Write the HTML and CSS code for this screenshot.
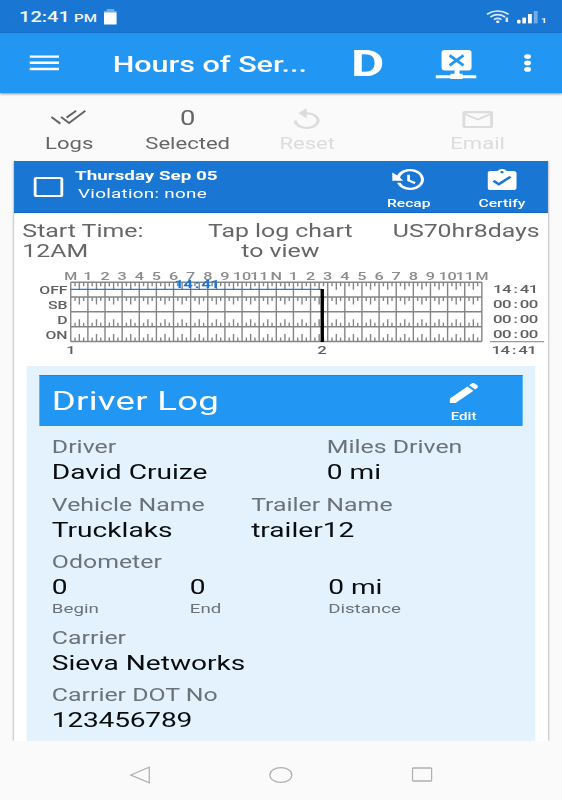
FILE: index.html
```html
<!DOCTYPE html>
<html lang="en">
<head>
<meta charset="utf-8">
<title>Hours of Service</title>
<link rel="stylesheet" href="styles.css">
</head>
<body>
<div class="screen">
  <header class="status">
    <span class="clock">12:41</span><span class="pm">PM</span>
    <svg class="battery" viewBox="0 0 14 17" preserveAspectRatio="none"><path d="M3 0h8v2h3v3H0V2h3z" fill="#75ace4"/><rect y="3.6" width="14" height="13" rx="1" fill="#fff"/></svg>
    <svg class="wifi" viewBox="0 0 24 14" preserveAspectRatio="none" fill="none" stroke="#d9e9fa" stroke-width="1.6"><path d="M.8 4.3Q11.5-2.2 22.5 4.3M4.3 7Q11.5 2.3 19 7M7.8 9.6Q11.5 7.2 15.4 9.6"/><ellipse cx="11.6" cy="11.7" rx="1.7" ry="1.2" fill="#fff" stroke="none"/><path d="M20.7 7.5v4.5" stroke-width="2.6"/></svg>
    <svg class="signal" viewBox="0 0 21 13" preserveAspectRatio="none" fill="#fff"><rect y="8.8" width="3.5" height="3.6" rx="1"/><rect x="5.3" y="6.6" width="3.7" height="5.8"/><rect x="11" y="3" width="3.8" height="9.4"/><rect x="16.8" y="0" width="3.8" height="12.4" fill="#75ace4"/></svg>
    <span class="sim">1</span>
  </header>

  <nav class="appbar">
    <svg class="menu" viewBox="0 0 30 16" preserveAspectRatio="none" stroke="#fff" stroke-width="2.4"><path d="M0 1.6h30M0 7.8h30M0 14h30"/></svg>
    <h1 class="title">Hours of Ser...</h1>
    <span class="duty">D</span>
    <svg class="network" viewBox="0 0 42 30" preserveAspectRatio="none"><path d="M9 0h24q3 0 3 2.5v15q0 3-3 3h-9v3.3h3v1.4h15v3H27v.9H15v-.9H0v-3h15v-1.4h4v-3.3H9q-3 0-3-3v-15Q6 0 9 0z" fill="#fff"/><path d="M14 5.3l14 10M28 5.3l-14 10" stroke="#2196f3" stroke-width="2.8"/></svg>
    <svg class="more" viewBox="0 0 7 18" preserveAspectRatio="none" fill="#fff"><ellipse cx="3.5" cy="2.6" rx="3.4" ry="2.4"/><ellipse cx="3.5" cy="9" rx="3.4" ry="2.4"/><ellipse cx="3.5" cy="15.4" rx="3.4" ry="2.4"/></svg>
  </nav>

  <section class="actions">
    <div class="action logs">
      <svg viewBox="0 0 36 15" preserveAspectRatio="none" fill="none" stroke="#666" stroke-width="2"><path d="M.8 7l9 6.6M10.5 7l8 6L34.8 .8M16 7.6L25.6 .8"/></svg>
      <span>Logs</span>
    </div>
    <div class="action selected"><b>0</b><span>Selected</span></div>
    <div class="action reset off">
      <svg viewBox="4 1 16 20" preserveAspectRatio="none" fill="#dcdcdc"><path d="M12 5V1L7 6l5 5V7c3.31 0 6 2.69 6 6s-2.69 6-6 6-6-2.69-6-6H4c0 4.42 3.58 8 8 8s8-3.58 8-8-3.58-8-8-8z"/></svg>
      <span>Reset</span>
    </div>
    <div class="action email off">
      <svg viewBox="2 4 20 16" preserveAspectRatio="none" fill="#dcdcdc"><path d="M22 6c0-1.1-.9-2-2-2H4c-1.1 0-2 .9-2 2v12c0 1.1.9 2 2 2h16c1.1 0 2-.9 2-2V6zm-2 0l-8 5-8-5h16zm0 12H4V8l8 5 8-5v10z"/></svg>
      <span>Email</span>
    </div>
  </section>

  <main class="card">
    <div class="day">
      <i class="check"></i>
      <div class="date"><strong>Thursday Sep 05</strong><span>Violation: none</span></div>
      <div class="tool recap">
        <svg viewBox="1 3 21 18" preserveAspectRatio="none" fill="#fff"><path d="M13 3c-4 0-7.3 2.2-8.5 5.5L1.2 6v7h7.2L6.3 10.5C7 7.3 9.7 5 13 5c3.87 0 7 3.13 7 7s-3.13 7-7 7c-2.9 0-5.4-1.7-6.4-4.2H4.4C5.5 18.4 9 21 13 21c4.97 0 9-4.03 9-9s-4.03-9-9-9zM11 8v5.3l4.7 2.6.9-1.5-3.8-2.1V8z"/></svg>
        <span>Recap</span>
      </div>
      <div class="tool certify">
        <svg viewBox="3 1 18 20" preserveAspectRatio="none" fill="#fff"><path d="M19 3h-4.18C14.4 1.84 13.3 1 12 1c-1.3 0-2.4.84-2.82 2H5c-1.1 0-2 .9-2 2v14c0 1.1.9 2 2 2h14c1.1 0 2-.9 2-2V5c0-1.1-.9-2-2-2zm-7 0c.55 0 1 .45 1 1s-.45 1-1 1-1-.45-1-1 .45-1 1-1zm-2 14l-4-4 1.41-1.41L10 14.17l6.59-6.59L18 9l-8 8z"/></svg>
        <span>Certify</span>
      </div>
    </div>

    <div class="info">
      <p class="start">Start Time:<br>12AM</p>
      <p class="hint">Tap log chart<br>to view</p>
      <p class="rule">US70hr8days</p>
    </div>

    <svg class="chart" id="chart" viewBox="14 264 534 102" preserveAspectRatio="none"></svg>

    <section class="log">
      <div class="log-head">
        <h2>Driver Log</h2>
        <div class="edit">
          <svg viewBox="3 3 18 18" preserveAspectRatio="none" fill="#fff"><path d="M3 17.25V21h3.75L17.81 9.94l-3.75-3.75L3 17.25zM20.71 7.04c.39-.39.39-1.02 0-1.41l-2.34-2.34c-.39-.39-1.02-.39-1.41 0l-1.83 1.83 3.75 3.75 1.83-1.83z"/></svg>
          <span>Edit</span>
        </div>
      </div>
      <div class="fields">
        <dl class="row driver">
          <div><dt>Driver</dt><dd>David Cruize</dd></div>
          <div><dt>Miles Driven</dt><dd>0 mi</dd></div>
        </dl>
        <dl class="row vehicle">
          <div><dt>Vehicle Name</dt><dd>Trucklaks</dd></div>
          <div><dt>Trailer Name</dt><dd>trailer12</dd></div>
        </dl>
        <div>
          <p class="label">Odometer</p>
          <div class="row odometer">
            <div><p class="value">0</p><small>Begin</small></div>
            <div><p class="value">0</p><small>End</small></div>
            <div><p class="value">0 mi</p><small>Distance</small></div>
          </div>
        </div>
        <dl><dt>Carrier</dt><dd>Sieva Networks</dd></dl>
        <dl><dt>Carrier DOT No</dt><dd class="digits">123456789</dd></dl>
      </div>
    </section>
  </main>

  <footer class="navbar">
    <svg viewBox="0 0 22 18" preserveAspectRatio="none"><path d="M1.5 9L20 1.2v15.6z"/></svg>
    <svg viewBox="0 0 24 18" preserveAspectRatio="none"><ellipse cx="12.5" cy="9" rx="11" ry="7.4"/></svg>
    <svg viewBox="0 0 22 18" preserveAspectRatio="none"><rect x=".8" y="2" width="19.2" height="13" rx="1"/></svg>
  </footer>
</div>
<script src="script.js"></script>
</body>
</html>
```
FILE: styles.css
```css
:root { --k: 1.405; }
* { box-sizing: border-box; margin: 0; padding: 0; }
html, body { width: 562px; height: 800px; overflow: hidden; background: #fafafa; }
/* Compact 400px layout, widened to the full window */
.screen {
  width: 400px; height: 800px;
  transform: scaleX(var(--k)); transform-origin: 0 0;
  display: flex; flex-direction: column;
  font-family: Roboto, "Liberation Sans", sans-serif; color: #666;
}
svg { display: block; flex: none; }
span, p, strong, h1, h2, dt, dd, small { white-space: nowrap; }

.status { height: 33px; flex: none; background: #1976d2; color: #f1f7fd; display: flex; align-items: flex-start; padding-left: calc(19px / var(--k)); }
.clock { font-size: 14.3px; font-weight: 500; line-height: 35px; width: calc(55px / var(--k)); }
.pm { font-size: 10.8px; font-weight: 500; line-height: 38px; width: calc(30px / var(--k)); }
.battery { width: calc(13px / var(--k)); height: 16px; margin-top: 9px; }
.wifi { width: calc(24px / var(--k)); height: 14px; margin: 10px 0 0 calc(369px / var(--k)); }
.signal { width: calc(21px / var(--k)); height: 13px; margin: 10.5px 0 0 calc(7px / var(--k)); }
.sim { font-size: 7.5px; font-weight: 700; line-height: 9px; margin: 15.5px 0 0 calc(3px / var(--k)); }

.appbar { height: 60px; flex: none; background: #2196f3; color: #fff; display: flex; align-items: flex-start; padding-left: calc(29px / var(--k)); box-shadow: 0 1px 2px rgba(0,0,0,.45); position: relative; }
.menu { width: calc(30px / var(--k)); height: 16px; margin-top: 22px; }
.title { font-size: 21.7px; font-weight: 500; line-height: 63.5px; margin-left: calc(53.7px / var(--k)); width: calc(238.3px / var(--k)); }
.duty { font-size: 36.5px; font-weight: 700; line-height: 61px; width: calc(84px / var(--k)); }
.network { width: calc(42px / var(--k)); height: 30px; margin-top: 16.7px; }
.more { width: calc(7px / var(--k)); height: 18px; margin: 21px 0 0 calc(47.4px / var(--k)); }

.actions { height: 68px; flex: none; display: flex; padding-left: calc(14.2px / var(--k)); }
.action { width: calc(110px / var(--k)); display: flex; flex-direction: column; align-items: center; justify-content: flex-end; padding-bottom: 7.5px; }
.action span { font-size: 15.7px; line-height: 20px; }
.action b { font-size: 19.5px; font-weight: 400; line-height: 24px; margin-bottom: 3px; }
.off { color: #dcdcdc; }
.selected { width: calc(127px / var(--k)); }
.reset { width: calc(112px / var(--k)); }
.email { width: calc(113px / var(--k)); margin-left: calc(58px / var(--k)); }
.logs svg { width: calc(36px / var(--k)); height: 15px; margin-bottom: 9px; }
.reset svg { width: calc(26px / var(--k)); height: 21px; margin-bottom: 4.5px; }
.email svg { width: calc(31px / var(--k)); height: 17px; margin-bottom: 5.5px; }

.card { width: calc(534px / var(--k)); height: 580px; flex: none; margin-left: calc(14px / var(--k)); background: #fff; box-shadow: 0 0 2px rgba(0,0,0,.5); clip-path: inset(0 -4px); }
.day { height: 52px; background: #1976d2; border-bottom: 1px solid #0d67c8; color: #fff; display: flex; padding-left: calc(20.2px / var(--k)); }
.check { width: calc(29px / var(--k)); height: 20px; margin-top: 16px; border: 2px solid #fff; border-radius: 2px; }
.date { margin: 6.2px 0 0 calc(12.4px / var(--k)); width: calc(305.4px / var(--k)); }
.date strong, .date span { display: block; line-height: 17.5px; font-size: 13.4px; }
.date span { padding-left: calc(3px / var(--k)); letter-spacing: .2px; }
.tool { width: calc(94px / var(--k)); display: flex; flex-direction: column; align-items: center; padding-top: 7.5px; margin-left: calc(-11.3px / var(--k)); }
.certify { margin-left: calc(1.2px / var(--k)); }
.tool svg { width: calc(29px / var(--k)); height: 21px; }
.recap svg { width: calc(32px / var(--k)); margin-left: calc(-1.6px / var(--k)); }
.tool span, .edit span { font-size: 11.1px; font-weight: 500; line-height: 14px; margin-top: 7.2px; }

.info { height: 51px; padding: 7.5px calc(8.4px / var(--k)) 0; display: flex; font-size: 17.7px; line-height: 20.5px; }
.start { width: calc(170px / var(--k)); }
.hint { width: calc(176px / var(--k)); text-align: center; }
.rule { margin-left: auto; }

.chart { width: 100%; height: 102px; }
.chart text { font-family: Roboto, sans-serif; font-weight: 500; fill: #606060; }
.chart .hour { fill: #8b8b8b; }
.chart .mark { fill: #1976d2; font-weight: 700; }
.chart .grid { stroke: #858585; stroke-width: 1.4; fill: none; }
.chart .tick { stroke: #858585; stroke-width: 1.4; fill: none; }

.log { width: calc(508.5px / var(--k)); height: 375px; margin-left: calc(13px / var(--k)); background: #e3f2fd; padding: 9px calc(12.8px / var(--k)) 0 calc(12px / var(--k)); }
.log-head { height: 51px; background: #2196f3; color: #fff; display: flex; justify-content: space-between; padding: 0 calc(44.6px / var(--k)) 0 calc(12.8px / var(--k)); border-top: 1px solid #1788e6; }
h2 { font-size: 26px; font-weight: 400; line-height: 51px; letter-spacing: .2px; }
.edit { width: calc(29px / var(--k)); display: flex; flex-direction: column; align-items: center; padding-top: 7px; }
.edit svg { width: calc(29px / var(--k)); height: 20px; }
.edit span { margin-top: 7px; font-size: 10.8px; }
.fields { padding: 11px 0 0 calc(12.9px / var(--k)); display: flex; flex-direction: column; gap: 9.5px; }
dt, .label { font-size: 17.7px; line-height: 21.5px; margin-bottom: .5px; color: #6b7379; }
dd, .value { font-size: 20px; line-height: 26px; color: #0a0c0d; }
.digits { letter-spacing: -.15px; }
small { display: block; font-size: 13.3px; line-height: 18px; color: #6b7379; }
.row { display: grid; }
.driver { grid-template-columns: calc(275px / var(--k)) 1fr; }
.vehicle { grid-template-columns: calc(199.3px / var(--k)) 1fr; }
.odometer { grid-template-columns: calc(138px / var(--k)) calc(138.3px / var(--k)) 1fr; }

.navbar { height: 59px; flex: none; display: flex; justify-content: center; align-items: flex-start; gap: calc(118px / var(--k)); padding-top: 24.5px; }
.navbar svg { width: calc(22px / var(--k)); height: 18px; fill: none; stroke: #b0b0b0; stroke-width: 1.3; }
.navbar svg:nth-child(2) { width: calc(24px / var(--k)); }
```
FILE: script.js
```js
const left = 70.7, col = 17.13, right = left + 24 * col;
const rows = [282.3, 297, 311.8, 326.8, 341.5];
let grid = '', tick = '', out = '';

rows.forEach(y => { grid += `M${left} ${y}H${right}`; });
for (let i = 0; i <= 24; i++) {
  const x = left + i * col;
  grid += `M${x} ${rows[0]}V${rows[4]}`;
  if (i === 24) break;
  [[4.3, 4], [8.6, 7.5], [12.9, 4]].forEach(([dx, len]) => {
    tick += `M${x + dx} ${rows[0]}v${len}M${x + dx} ${rows[1]}v${len}`;
    tick += `M${x + dx} ${rows[3]}v${-len}M${x + dx} ${rows[4]}v${-len}`;
  });
}
out += `<path class="tick" d="${tick}"/><path class="grid" d="${grid}"/>`;
out += `<path d="M${left} 289.4H322" stroke="#3279cf" stroke-width="1.3"/>`;
out += `<path d="M322.2 289V342" stroke="#000" stroke-width="3.4"/>`;
out += `<path d="M490 341.6H544" stroke="#999" stroke-width="1.2"/>`;

const wide = (x, y, str, size, anchor, cls = '') =>
  `<text class="${cls}" transform="translate(${x} ${y}) scale(1.4 1)" font-size="${size}" text-anchor="${anchor}">${str}</text>`;
const mono = (x, y, str, cls = '') =>
  `<text class="${cls}" transform="translate(${x} ${y}) scale(1.45 1)" font-size="11.6" text-anchor="middle" x="3.2 9.4 15.6 21.8 28">${str}</text>`;

for (let i = 0; i <= 24; i++) {
  const h = i % 24 === 0 ? 'M' : i === 12 ? 'N' : i % 12;
  out += wide(left + i * col, 279.6, h, h === 'M' ? 10.6 : 11.6, 'middle', 'hour');
}
['OFF', 'SB', 'D', 'ON'].forEach((s, i) => { out += wide(67.5, 293.5 + i * 15, s, 11.3, 'end'); });
['14:41', '00:00', '00:00', '00:00'].forEach((s, i) => { out += mono(493, 293.4 + i * 15, s); });
out += mono(491.5, 354, '14:41') + mono(174.5, 288.2, '14:41', 'mark');
out += wide(70.7, 354.2, '1', 11.6, 'middle') + wide(322.2, 354.2, '2', 11.6, 'middle');
document.getElementById('chart').innerHTML = out;
```
